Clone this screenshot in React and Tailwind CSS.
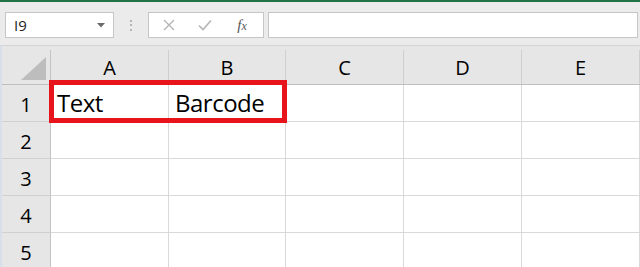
import React from "react";

const cols = ["A", "B", "C", "D", "E"];
const rows = [1, 2, 3, 4, 5];
const cells = { "A1": "Text", "B1": "Barcode" };

function FormulaBar() {
  return (
    <div className="h-[43px] flex items-start pt-[10px] pl-[5px] bg-[#ebebeb]">
      {/* name box */}
      <div className="w-[109px] h-[26px] bg-white border border-[#c6c6c6] flex items-center justify-between pl-[8px] pr-[8px]">
        <span className="text-[15px] text-[#222] leading-none">I9</span>
        <svg width="8" height="5" viewBox="0 0 8 5">
          <path d="M0 0 L8 0 L4 4.5 Z" fill="#6b6b6b" />
        </svg>
      </div>

      <div className="w-[34px] h-[26px] flex flex-col items-center justify-center gap-[2.5px]">
        <span className="w-[2px] h-[2px] rounded-full bg-[#a3a3a3]" />
        <span className="w-[2px] h-[2px] rounded-full bg-[#a3a3a3]" />
        <span className="w-[2px] h-[2px] rounded-full bg-[#a3a3a3]" />
      </div>

      {/* cancel / enter / insert function */}
      <div className="w-[116px] h-[26px] bg-white border border-[#c6c6c6] flex items-center">
        <div className="w-[38px] flex justify-center pl-[2px]">
          <svg width="12" height="12" viewBox="0 0 12 12">
            <path d="M1 1 L11 11 M11 1 L1 11" stroke="#b5b5b5" strokeWidth="1.4" />
          </svg>
        </div>
        <div className="w-[36px] flex justify-center">
          <svg width="14" height="12" viewBox="0 0 14 12">
            <path d="M1 6.5 L5 10.5 L13 1.5" stroke="#b5b5b5" strokeWidth="1.6" fill="none" />
          </svg>
        </div>
        <div className="flex-1 flex justify-center pr-[2px]">
          <span className="italic text-[15px] leading-none text-[#555]" style={{ fontFamily: "'Liberation Serif', serif" }}>
            f<span className="text-[12px]">x</span>
          </span>
        </div>
      </div>

      <div className="ml-[4px] w-[370px] h-[26px] bg-white border border-[#c6c6c6]" />
    </div>
  );
}

export default function App() {
  return (
    <div
      className="w-[640px] h-[267px] overflow-hidden bg-[#ebebeb] relative"
      style={{ fontFamily: "'Open Sans', 'Noto Sans', sans-serif" }}
    >
      <div className="h-[2px] bg-[#217346]" />
      <FormulaBar />

      <div className="border-t border-[#d4d4d4] border-l-[2px] border-l-[#d9dfe8] grid grid-cols-[49px_118px_117px_118px_118px_1fr] bg-white">
        {/* header row */}
        <div className="h-[39px] bg-[#e6e6e6] border-b border-[#bfbfbf] flex flex-col pt-[4px]">
          <div className="flex-1 border-r border-[#c4c4c4] flex items-end justify-end pr-[4px] pb-[4px]">
            <svg width="25" height="23" viewBox="0 0 25 23">
              <path d="M25 0 L25 23 L0 23 Z" fill="#bdbdbd" />
            </svg>
          </div>
        </div>
        {cols.map((c) => (
          <div key={c} className="h-[39px] bg-[#e6e6e6] border-b border-[#bfbfbf] flex flex-col pt-[4px]">
            <div className="flex-1 border-r border-[#cfcfcf] flex items-end justify-center pb-[6px]">
              <span className="text-[20px] leading-[20px] text-black">{c}</span>
            </div>
          </div>
        ))}

        {rows.map((r) => (
          <React.Fragment key={r}>
            <div className="h-[37px] bg-[#e6e6e6] border-r border-[#c4c4c4] border-b border-b-[#d0d0d0] flex items-center justify-center pt-[3px]">
              <span className="text-[20px] leading-[20px] text-black">{r}</span>
            </div>
            {cols.map((c) => (
              <div
                key={c + r}
                className="h-[37px] border-r border-b border-[#d9d9d9] flex items-center pl-[6px]"
              >
                <span className="text-[24px] leading-[24px] tracking-[-0.5px] text-black whitespace-nowrap">
                  {cells[c + r] || ""}
                </span>
              </div>
            ))}
          </React.Fragment>
        ))}
      </div>

      {/* highlight around A1:B1 */}
      <div className="absolute left-[49px] top-[80px] w-[238px] h-[43px] border-[5px] border-[#e8141c] pointer-events-none" />
    </div>
  );
}
